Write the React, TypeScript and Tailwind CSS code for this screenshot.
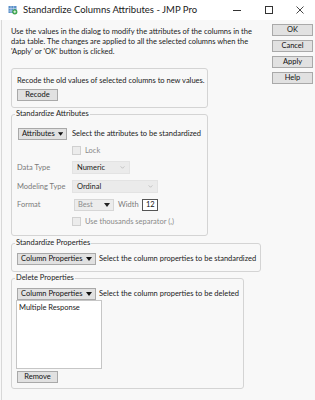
import React from 'react';

const font = { fontFamily: 'Lato, "Noto Sans", sans-serif' };

function Btn({ label, className = '' }: { label: string; className?: string }) {
  return (
    <div
      className={`h-[12px] border border-[#a9a9a9] bg-[#e1e1e1] flex items-center justify-center text-[7.5px] leading-none text-[#111] whitespace-nowrap ${className}`}
    >
      {label}
    </div>
  );
}

function Drop({ label, className = '', disabled = false }: { label: string; className?: string; disabled?: boolean }) {
  return (
    <div
      className={`h-[12px] border flex items-center justify-between pl-[3px] pr-[3px] gap-[3px] text-[7.5px] leading-none whitespace-nowrap shrink-0 ${
        disabled ? 'border-[#d6d6d6] bg-[#ececec] text-[#8c8c8c]' : 'border-[#a9a9a9] bg-[#e1e1e1] text-[#111]'
      } ${className}`}
    >
      <span>{label}</span>
      <svg viewBox="0 0 6 4" className="w-[6px] h-[4px]">
        <path d="M0 0 H6 L3 4 Z" fill={disabled ? '#222' : '#111'} />
      </svg>
    </div>
  );
}

function Combo({ label, className = '' }: { label: string; className?: string }) {
  return (
    <div className={`h-[13px] bg-[#ebebeb] border border-[#e3e3e3] flex items-center justify-between pl-[4px] pr-[4px] text-[7.5px] leading-none text-[#222] ${className}`}>
      <span>{label}</span>
      <svg viewBox="0 0 6 4" className="w-[5px] h-[3px]">
        <path d="M0.5 0.5 L3 3 L5.5 0.5" fill="none" stroke="#b0b0b0" strokeWidth="0.9" />
      </svg>
    </div>
  );
}

function Check({ label }: { label: string }) {
  return (
    <div className="flex items-center gap-[4px] text-[7.5px] leading-none text-[#8a8a8a] whitespace-nowrap">
      <div className="w-[9px] h-[9px] border border-[#d0d0d0] bg-[#ececec]" />
      <span>{label}</span>
    </div>
  );
}

function Group({ title, className = '', children }: { title?: string; className?: string; children: React.ReactNode }) {
  return (
    <fieldset className={`border border-[#d4d4d4] rounded-[3px] px-[5px] min-w-0 ${className}`}>
      {title && <legend className="-ml-[2px] px-[1px] text-[7.5px] leading-[10px] text-[#222] whitespace-nowrap">{title}</legend>}
      {children}
    </fieldset>
  );
}

export default function App() {
  return (
    <div className="w-[315px] h-[400px] bg-[#f8f8f8] overflow-hidden flex flex-col" style={font}>
      {/* Title bar */}
      <div className="h-[20px] bg-white flex items-center shrink-0">
        <svg viewBox="0 0 10 10" className="w-[10px] h-[10px] ml-[8px]">
          <rect x="0.5" y="1" width="8" height="7" fill="#5a8fc9" />
          <path d="M0.5 3.5 H8.5 M0.5 6 H8.5 M3 1 V8 M5.7 1 V8" stroke="#cfe0f2" strokeWidth="0.6" />
          <circle cx="6.8" cy="6.8" r="2.6" fill="#3aa34a" />
          <path d="M5.4 6.8 H8.2 M6.8 5.4 V8.2" stroke="#fff" strokeWidth="0.8" />
        </svg>
        <span className="ml-[5px] text-[9.5px] text-[#1a1a1a] whitespace-nowrap">Standardize Columns Attributes - JMP Pro</span>
        <div className="ml-auto flex items-center h-full">
          <div className="w-[32px] flex justify-center">
            <div className="w-[8px] h-px bg-[#333]" />
          </div>
          <div className="w-[32px] flex justify-center">
            <div className="w-[8px] h-[8px] border border-[#333]" />
          </div>
          <div className="w-[30px] flex justify-center">
            <svg viewBox="0 0 8 8" className="w-[8px] h-[8px]">
              <path d="M0.5 0.5 L7.5 7.5 M7.5 0.5 L0.5 7.5" stroke="#333" strokeWidth="0.9" />
            </svg>
          </div>
        </div>
      </div>

      <div className="flex flex-1 border-l border-[#d8d8d8] ml-[1px]">
        {/* Left column */}
        <div className="flex-1 pl-[9px] min-w-0">
          <p className="mt-[7px] text-[7.5px] leading-[10px] text-[#1a1a1a] whitespace-nowrap">
            Use the values in the dialog to modify the attributes of the columns in the
            <br />
            data table. The changes are applied to all the selected columns when the
            <br />
            'Apply' or 'OK' button is clicked.
          </p>

          <Group className="mt-[11px] w-[197px] h-[40px] pt-[7px]">
            <div className="text-[7.5px] leading-[10px] text-[#1a1a1a] whitespace-nowrap">Recode the old values of selected columns to new values.</div>
            <Btn label="Recode" className="w-[41px] mt-[3px]" />
          </Group>

          <Group title="Standardize Attributes" className="mt-[1px] w-[197px] h-[127px] pt-[9px]">
            <div className="flex items-center gap-[5px]">
              <Drop label="Attributes" className="w-[49px] ml-[1px]" />
              <span className="text-[7.5px] leading-none text-[#1a1a1a] whitespace-nowrap">Select the attributes to be standardized</span>
            </div>
            <div className="grid grid-cols-[55px_auto] items-center gap-y-[6px] mt-[6px] text-[7.5px] leading-none text-[#7a7a7a] whitespace-nowrap">
              <div />
              <Check label="Lock" />
              <span>Data Type</span>
              <Combo label="Numeric" className="w-[58px]" />
              <span>Modeling Type</span>
              <Combo label="Ordinal" className="w-[86px]" />
              <span>Format</span>
              <div className="flex items-center">
                <Drop label="Best" disabled className="w-[40px] ml-[2px] justify-around" />
                <span className="ml-[4px]">Width</span>
                <div className="ml-[3px] w-[16px] h-[12px] bg-white border border-[#555] flex items-center justify-end pr-[2px] text-[#111]">12</div>
              </div>
              <div />
              <Check label="Use thousands separator (,)" />
            </div>
          </Group>

          <Group title="Standardize Properties" className="mt-[2px] w-[250px] h-[34px] pt-[5px]">
            <div className="flex items-center gap-[3px]">
              <Drop label="Column Properties" className="w-[79px]" />
              <span className="text-[7.5px] leading-none text-[#1a1a1a] whitespace-nowrap">Select the column properties to be standardized</span>
            </div>
          </Group>

          <Group title="Delete Properties" className="mt-[1px] w-[233px] h-[116px] pt-[5px]">
            <div className="flex items-center gap-[3px]">
              <Drop label="Column Properties" className="w-[79px]" />
              <span className="text-[7.5px] leading-none text-[#1a1a1a] whitespace-nowrap">Select the column properties to be deleted</span>
            </div>
            <div className="w-[86px] h-[69px] bg-white border border-[#c6c6c6] -ml-[1px] pl-[2px] pt-[2px] text-[7.5px] leading-[10px] text-[#1a1a1a]">
              Multiple Response
            </div>
            <Btn label="Remove" className="w-[41px] mt-[2px]" />
          </Group>
        </div>

        {/* Right column */}
        <div className="w-[41px] mr-[2px] pt-[4px] flex flex-col gap-[4px] shrink-0">
          <Btn label="OK" />
          <Btn label="Cancel" />
          <Btn label="Apply" />
          <Btn label="Help" />
        </div>
      </div>
    </div>
  );
}
